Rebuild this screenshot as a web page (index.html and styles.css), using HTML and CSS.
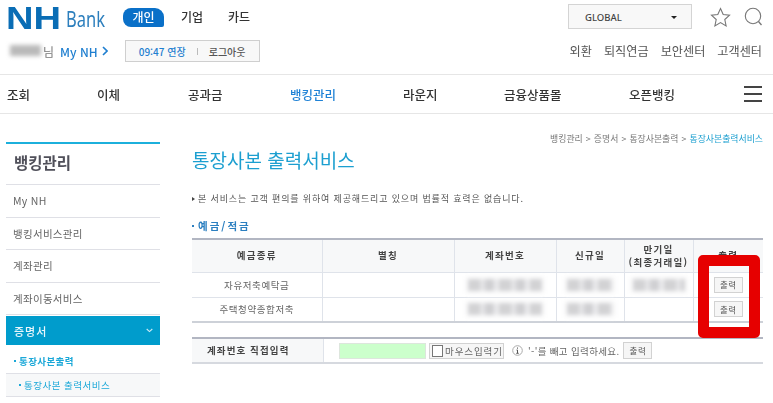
FILE: index.html
```html
<!DOCTYPE html>
<html lang="ko">
<head>
<meta charset="utf-8">
<title>통장사본 출력서비스</title>
<link rel="stylesheet" href="styles.css">
</head>
<body>
<div class="page">
  <header class="top">
    <div class="top-left">
      <div class="brand-row">
        <svg class="logo" width="100" height="28" viewBox="0 0 100 28">
          <text class="logo-nh" x="0" y="24.500" textLength="55" lengthAdjust="spacingAndGlyphs">NH</text>
          <text class="logo-bank" x="60" y="22.500" textLength="39" lengthAdjust="spacingAndGlyphs">Bank</text>
        </svg>
        <nav class="segments">
          <a class="segment active">개인</a>
          <a class="segment">기업</a>
          <a class="segment">카드</a>
        </nav>
      </div>
      <div class="user-row">
        <span class="user-name"><i class="user-blur"></i></span>
        <span class="user-suffix">님</span>
        <a class="my-nh">My NH</a>
        <svg class="my-chevron" width="6" height="10" viewBox="0 0 6 10"><path d="M1 1l4 4-4 4" fill="none" stroke="#1f7fd0" stroke-width="1.6"/></svg>
        <div class="session">
          <span class="session-time">09:47 연장</span>
          <i class="session-sep"></i>
          <span class="session-out">로그아웃</span>
        </div>
      </div>
    </div>
    <div class="top-right">
      <div class="tools">
        <div class="global">GLOBAL<i class="caret"></i></div>
        <svg class="icon-star" width="21" height="20" viewBox="0 0 21 20"><path d="M10.500 1.500l2.700 6 6.300.7-4.700 4.300 1.300 6.400-5.600-3.300-5.600 3.300 1.300-6.400L1.500 8.200l6.300-.7z" fill="none" stroke="#777" stroke-width="1.100"/></svg>
        <svg class="icon-search" width="19" height="20" viewBox="0 0 19 20"><circle cx="9" cy="9" r="7.700" fill="none" stroke="#777" stroke-width="1.100"/><path d="M14.500 14.500l3 3.500" stroke="#777" stroke-width="1.300"/></svg>
      </div>
      <div class="quick">
        <a>외환</a><a>퇴직연금</a><a>보안센터</a><a>고객센터</a>
      </div>
    </div>
  </header>

  <nav class="gnb">
    <a class="gnb-a">조회</a>
    <a class="gnb-b">이체</a>
    <a class="gnb-c">공과금</a>
    <a class="gnb-d current">뱅킹관리</a>
    <a class="gnb-e">라운지</a>
    <a class="gnb-f">금융상품몰</a>
    <a class="gnb-g">오픈뱅킹</a>
    <span class="burger"><i></i><i></i><i></i></span>
  </nav>

  <div class="content">
    <aside class="side">
      <h2 class="side-title">뱅킹관리</h2>
      <a class="side-item">My NH</a>
      <a class="side-item">뱅킹서비스관리</a>
      <a class="side-item">계좌관리</a>
      <a class="side-item">계좌이동서비스</a>
      <a class="side-open">증명서
        <svg width="7" height="5" viewBox="0 0 7 5"><path d="M.7 1l2.800 2.600L6.300 1" fill="none" stroke="#cdeaf5" stroke-width="1.100"/></svg>
      </a>
      <a class="side-sub"><i class="dot"></i>통장사본출력</a>
      <a class="side-leaf"><i class="dot"></i>통장사본 출력서비스</a>
    </aside>

    <main class="main">
      <div class="crumbs">뱅킹관리 &gt; 증명서 &gt; 통장사본출력 &gt; <b>통장사본출력서비스</b></div>
      <h1 class="title">통장사본 출력서비스</h1>
      <p class="notice"><i class="notice-mark"></i>본 서비스는 고객 편의를 위하여 제공해드리고 있으며 법률적 효력은 없습니다.</p>
      <h3 class="section"><i class="dot"></i>예금/적금</h3>

      <table class="accounts">
        <colgroup>
          <col class="c1"><col class="c2"><col class="c3"><col class="c4"><col class="c5"><col class="c6">
        </colgroup>
        <thead>
          <tr>
            <th>예금종류</th><th>별칭</th><th>계좌번호</th><th>신규일</th><th>만기일<br>(최종거래일)</th><th>출력</th>
          </tr>
        </thead>
        <tbody>
          <tr>
            <td>자유저축예탁금</td><td></td>
            <td><i class="smear w-acct"></i></td>
            <td><i class="smear w-date"></i></td>
            <td><i class="smear w-due"></i></td>
            <td><button class="btn">출력</button></td>
          </tr>
          <tr>
            <td>주택청약종합저축</td><td></td>
            <td><i class="smear w-acct"></i></td>
            <td><i class="smear w-date"></i></td>
            <td></td>
            <td><button class="btn">출력</button></td>
          </tr>
        </tbody>
      </table>

      <div class="direct">
        <div class="direct-label">계좌번호 직접입력</div>
        <div class="direct-body">
          <input class="direct-input" type="text" aria-label="계좌번호">
          <span class="mouse"><i class="mouse-box"></i>마우스입력기</span>
          <svg class="info" width="11" height="11" viewBox="0 0 11 11"><circle cx="5.500" cy="5.500" r="4.800" fill="none" stroke="#aaa"/><path d="M5.500 2.500v1.200M4.500 5h1v3M4.300 8.300h2.400" stroke="#555" fill="none"/></svg>
          <span class="hint">'-'를 빼고 입력하세요.</span>
          <button class="btn btn-plain">출력</button>
        </div>
      </div>
    </main>
  </div>
  <div class="highlight"></div>
</div>
</body>
</html>
```

FILE: styles.css
```css
* { box-sizing: border-box; }
html, body { margin: 0; padding: 0; background: #fff; }
body {
  width: 773px;
  height: 403px;
  overflow: hidden;
  font-family: "Noto Sans CJK KR", "Noto Sans", sans-serif;
  color: #333;
}
i { display: block; font-style: normal; }
a { display: block; }

.page {
  position: relative;
  width: 773px;
  height: 403px;
  overflow: hidden;
  filter: blur(0.5px);
}

/* top */
.top {
  height: 75px;
  border-bottom: 1px solid #e6e6e6;
  display: flex;
  justify-content: space-between;
}
.top-left { padding-left: 6px; }
.brand-row { display: flex; align-items: center; height: 34px; padding-top: 1px; }
.logo { display: block; width: 100px; height: 28px; overflow: visible; }
.logo-nh { font: 700 31px "Liberation Sans", sans-serif; fill: #0a6db5; }
.logo-bank { font: 400 21px "Noto Sans", sans-serif; fill: #2d7fbd; }
.segments { display: flex; margin-left: 17px; margin-top: -1px; }
.segment {
  width: 41px;
  height: 19px;
  line-height: 18px;
  text-align: center;
  font-size: 12px;
  font-weight: 500;
  color: #333;
}
.segment + .segment { width: 36px; margin-right: 11px; }
.segment.active {
  background: #0a70c8;
  color: #fff;
  border-radius: 8px 9px 2px 8px;
  margin-right: 10px;
}
.user-row { display: flex; align-items: center; height: 22px; margin-top: 6px; }
.user-name { width: 37px; height: 12px; }
.user-blur { width: 31px; height: 11px; margin-left: 4px; background: #b9b9b9; filter: blur(2px); }
.user-suffix { font-size: 12px; color: #777; margin-right: 6px; }
.my-nh { font-size: 12px; font-weight: 500; color: #1f7fd0; }
.my-chevron { margin-left: 4px; }
.session {
  width: 135px;
  height: 22px;
  margin-left: 17px;
  display: flex;
  align-items: center;
  justify-content: center;
  background: #f8f8f8;
  border: 1px solid #cfcfcf;
  font-size: 10px;
  font-weight: 500;
}
.session-time { color: #1f7fd0; }
.session-sep { width: 1px; height: 7px; background: #bbb; margin: 0 11px; }
.session-out { color: #555; }

.top-right { padding-right: 11px; display: flex; flex-direction: column; align-items: flex-end; }
.tools { display: flex; align-items: center; height: 25px; margin-top: 4px; }
.global {
  width: 124px;
  height: 25px;
  line-height: 25px;
  padding-left: 16px;
  background: #f8f8f8;
  border: 1px solid #d4d4d4;
  font-family: "Noto Sans", sans-serif;
  font-size: 9.500px;
  font-weight: 500;
  color: #444;
  position: relative;
}
.caret {
  position: absolute;
  right: 14px;
  top: 11px;
  width: 0;
  height: 0;
  border: 3px solid transparent;
  border-top: 3.500px solid #222;
  border-bottom: 0;
}
.icon-star { margin-left: 18px; }
.icon-search { margin-left: 13px; margin-right: -1px; }
.quick { display: flex; gap: 12px; margin-top: 13px; font-size: 12.150px; color: #555; }

/* gnb */
.gnb {
  position: relative;
  height: 39px;
  border-bottom: 1px solid #e6e6e6;
  display: flex;
  align-items: center;
  padding-left: 7px;
  font-size: 12.500px;
  font-weight: 500;
  color: #333;
}
.gnb-a { width: 90px; }
.gnb-b { width: 91px; }
.gnb-c { width: 102px; }
.gnb-d { width: 113px; }
.gnb-e { width: 101px; }
.gnb-f { width: 125px; }
.gnb-g { width: 115px; }
.current { color: #1f82d6; }
.burger { width: 18px; display: flex; flex-direction: column; gap: 5px; }
.burger i { height: 2px; background: #444; }

/* body */
.content { display: flex; padding: 28px 10px 0 6px; }
.side { width: 154px; flex: none; }
.side-title {
  margin: 0;
  height: 43px;
  border-top: 2px solid #1cb0dc;
  border-bottom: 1px solid #dfe0e6;
  padding: 7px 0 0 8px;
  font-size: 15.500px;
  line-height: 22px;
  font-weight: 700;
  color: #50505a;
}
.side-item {
  height: 32.500px;
  line-height: 31px;
  padding-left: 7px;
  border-bottom: 1px solid #dfe0e6;
  font-size: 10.500px;
  color: #666;
  letter-spacing: .3px;
}
.side-open {
  height: 29px;
  margin-top: 1px;
  background: #009ccc;
  color: #e8f6fb;
  padding: 0 7px 0 8px;
  display: flex;
  align-items: center;
  justify-content: space-between;
  font-size: 11px;
  font-weight: 500;
  letter-spacing: 1px;
}
.side-sub {
  height: 29px;
  padding: 4px 0 0 8px;
  display: flex;
  align-items: center;
  border-bottom: 1px solid #dfe0e6;
  font-size: 9.500px;
  font-weight: 700;
  color: #1ba8d8;
  letter-spacing: .4px;
}
.side-leaf {
  height: 23px;
  padding-left: 13px;
  display: flex;
  align-items: center;
  background: #f7f8f9;
  border-bottom: 1px solid #dfe0e6;
  font-size: 9.500px;
  color: #1ba8d8;
  letter-spacing: .5px;
}
.dot { width: 2px; height: 2px; background: currentColor; margin-right: 3px; flex: none; }

.main { width: 571px; margin-left: 32px; }
.crumbs {
  margin-top: -10px;
  height: 14px;
  line-height: 14px;
  text-align: right;
  font-size: 8.900px;
  color: #777;
  word-spacing: .6px;
  white-space: nowrap;
}
.crumbs b { font-weight: 400; color: #1c9fd0; }
.title {
  margin: -1px 0 0;
  height: 29px;
  line-height: 29px;
  font-size: 19px;
  font-weight: 400;
  color: #1c9fd0;
}
.notice {
  margin: 18px 0 0;
  height: 14px;
  line-height: 14px;
  display: flex;
  align-items: center;
  font-size: 9px;
  color: #555;
  letter-spacing: .85px;
  white-space: pre;
}
.notice-mark {
  width: 0;
  height: 0;
  margin-right: 3px;
  border: 2.500px solid transparent;
  border-left: 3px solid #444;
  border-right: 0;
}
.section {
  margin: 13px 0 0;
  height: 14px;
  line-height: 14px;
  display: flex;
  align-items: center;
  font-size: 10.500px;
  font-weight: 700;
  color: #2b7fc0;
  letter-spacing: 2px;
}
.section .dot { margin-right: 4px; }

.accounts {
  width: 571px;
  margin-top: 5px;
  table-layout: fixed;
  border-collapse: collapse;
  border-top: 2px solid #b2b6c2;
  border-bottom: 2px solid #cdd1d8;
  font-size: 9.500px;
}
.c1 { width: 130px; }
.c2 { width: 132px; }
.c3 { width: 102px; }
.c4 { width: 68px; }
.c5 { width: 69px; }
.c6 { width: 70px; }
.accounts th {
  height: 33px;
  padding: 0;
  background: #f7f8f9;
  border-left: 1px solid #dfe3ea;
  border-bottom: 1px solid #dfe3ea;
  font-size: 9.500px;
  line-height: 13px;
  font-weight: 700;
  color: #444;
  letter-spacing: 1.300px;
}
.accounts td {
  height: 25px;
  padding: 0;
  text-align: center;
  color: #666;
  border-left: 1px solid #dfe3ea;
  border-bottom: 1px solid #dfe3ea;
  letter-spacing: .6px;
}
.accounts th:first-child, .accounts td:first-child { border-left: 0; }
.accounts tbody tr:last-child td { border-bottom: 0; }
.smear {
  height: 12px;
  margin: 0 auto;
  background: repeating-linear-gradient(90deg, #d2d2d4 0 12px, #e6e6e8 12px 17px, #cfcfd2 17px 26px, #ececee 26px 31px);
  box-shadow: 0 0 0 3px #fbfbfb;
  filter: blur(2px);
}
.w-acct { width: 74px; }
.w-date { width: 46px; }
.w-due { width: 52px; }
.btn {
  width: 29px;
  height: 16px;
  padding: 0;
  background: #f6f6f6;
  border: 1px solid #d2d2d2;
  font-family: inherit;
  font-size: 8.500px;
  line-height: 13px;
  color: #555;
  letter-spacing: .5px;
  vertical-align: middle;
}

.direct {
  margin-top: 14px;
  height: 27px;
  display: flex;
  border-top: 2px solid #b2b6c2;
  border-bottom: 2px solid #d6d9df;
}
.direct-label {
  width: 132px;
  padding-left: 15px;
  background: #f7f8f9;
  border-right: 1px solid #dfe3ea;
  font-size: 9.500px;
  line-height: 23px;
  font-weight: 700;
  color: #444;
  letter-spacing: 1.100px;
  white-space: nowrap;
}
.direct-body { flex: 1; display: flex; align-items: center; padding-left: 15px; font-size: 9.500px; color: #666; }
.direct-input {
  width: 87px;
  height: 16px;
  margin: 0;
  padding: 0;
  background: #ccffcc;
  border: 1px solid #dde6dd;
}
.mouse {
  width: 75px;
  height: 16px;
  margin-left: 3px;
  display: flex;
  align-items: center;
  background: #f6f6f6;
  border: 1px solid #d2d2d2;
  letter-spacing: .9px;
  white-space: nowrap;
  overflow: hidden;
}
.mouse-box { width: 11px; height: 12px; margin: 0 2px 0 2px; background: #fff; border: 1px solid #777; flex: none; }
.info { margin-left: 8px; }
.hint { margin-left: 5px; letter-spacing: .35px; white-space: nowrap; }
.btn-plain { margin-left: 4px; height: 17px; }

.highlight {
  position: absolute;
  left: 698px;
  top: 255px;
  width: 62px;
  height: 83px;
  border: 11px solid #e60000;
  border-radius: 5px;
}
```
